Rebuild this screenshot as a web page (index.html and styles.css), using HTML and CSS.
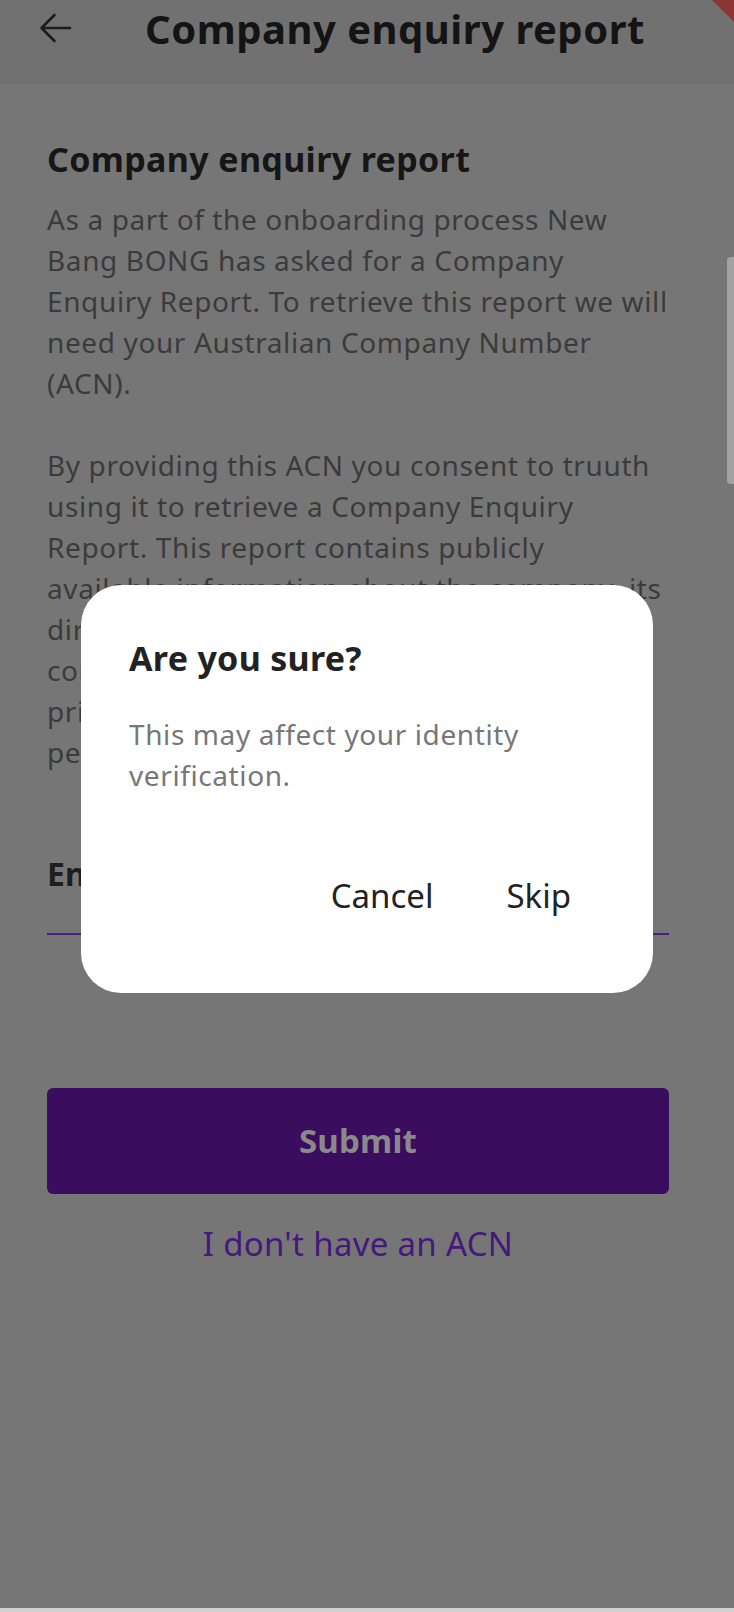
FILE: index.html
```html
<!DOCTYPE html>
<html lang="en">
<head>
<meta charset="utf-8">
<title>Company enquiry report</title>
<link rel="stylesheet" href="styles.css">
</head>
<body>
<div class="screen">
  <header class="appbar">
    <button class="back" aria-label="Back">
      <svg width="34" height="32" viewBox="0 0 34 32"><path d="M32 16H3.5M16.5 3L3.5 16L16.5 29" fill="none" stroke="#1c1c1c" stroke-width="2.6" stroke-linecap="round" stroke-linejoin="round"/></svg>
    </button>
    <h1 class="appbar-title">Company enquiry report</h1>
  </header>
  <main class="content">
    <h2 class="heading">Company enquiry report</h2>
    <p class="para">As a part of the onboarding process New<br>Bang BONG has asked for a Company<br>Enquiry Report. To retrieve this report we will<br>need your Australian Company Number<br>(ACN).</p>
    <p class="para">By providing this ACN you consent to truuth<br>using it to retrieve a Company Enquiry<br>Report. This report contains publicly<br>available information about the company, its<br>directors and shareholders. It may<br>contain personal information about<br>principals such as names and<br>persons associated with it.</p>
    <div class="field">
      <label class="field-label">Enter your ACN</label>
    </div>
    <button class="submit">Submit</button>
    <a class="link">I don't have an ACN</a>
  </main>
  <div class="navbar"></div>
</div>
<div class="scrollbar"></div>
<div class="debug-banner"></div>
<div class="overlay">
  <div class="dialog">
    <h3 class="dialog-title">Are you sure?</h3>
    <p class="dialog-body">This may affect your identity verification.</p>
    <div class="dialog-actions">
      <button class="dialog-btn">Cancel</button>
      <button class="dialog-btn">Skip</button>
    </div>
  </div>
</div>
</body>
</html>
```

FILE: styles.css
```css
* { box-sizing: border-box; }
html, body { margin: 0; padding: 0; }
body {
  font-family: "Noto Sans", "Open Sans", sans-serif;
  background: #767676;
  width: 734px;
  height: 1612px;
  overflow: hidden;
}
.screen {
  min-height: 1612px;
  display: flex;
  flex-direction: column;
}
.appbar {
  height: 84px;
  background: #717171;
  display: flex;
  align-items: flex-start;
  flex-shrink: 0;
}
.back {
  border: 0;
  background: none;
  padding: 0;
  margin: 12px 0 0 38px;
  width: 34px;
  height: 32px;
  display: block;
}
.back svg { display: block; }
.appbar-title {
  margin: 1px 0 0 73px;
  font-size: 40px;
  line-height: 56px;
  font-weight: 700;
  color: #141414;
  letter-spacing: 0.5px;
  white-space: nowrap;
}
.content {
  padding: 0 60px 0 47px;
  display: flex;
  flex-direction: column;
}
.heading {
  margin: 53px 0 0 0;
  font-size: 34px;
  line-height: 44px;
  font-weight: 700;
  color: #161616;
  letter-spacing: 0.35px;
}
.para {
  margin: 18px 0 0 0;
  font-size: 28px;
  line-height: 41px;
  color: #3b3b3b;
  letter-spacing: 0.62px;
  white-space: nowrap;
}
.para + .para { margin-top: 41px; }
.field {
  margin: 81px 5px 0 0;
  padding-bottom: 39px;
  border-bottom: 2px solid #4b1c85;
}
.field-label {
  display: block;
  font-size: 32px;
  line-height: 40px;
  font-weight: 700;
  color: #1e1e1e;
}
.submit {
  margin: 153px 5px 0 0;
  height: 106px;
  border: 0;
  border-radius: 6px;
  background: #3a0d5e;
  color: #8a8a8a;
  font-family: inherit;
  font-size: 33px;
  font-weight: 700;
  line-height: 106px;
  padding: 0;
  letter-spacing: 0.2px;
}
.link {
  margin: 28px 5px 0 0;
  text-align: center;
  font-size: 33px;
  line-height: 44px;
  color: #45187c;
  letter-spacing: 0.3px;
}
.navbar {
  margin-top: auto;
  height: 4px;
  background: #d2d2d2;
}
.scrollbar {
  position: absolute;
  left: 727px;
  top: 257px;
  width: 7px;
  height: 227px;
  background: #a2a2a2;
  border-radius: 4px 0 0 4px;
}
.debug-banner {
  position: absolute;
  right: 0;
  top: 0;
  width: 22px;
  height: 22px;
  background: #8e3535;
  clip-path: polygon(0 0, 100% 0, 100% 100%);
}
.overlay {
  position: fixed;
  inset: 0;
  display: flex;
  justify-content: center;
  align-items: flex-start;
  padding-top: 585px;
}
.dialog {
  width: 572px;
  height: 408px;
  background: #ffffff;
  border-radius: 40px;
  padding: 51px 82px 0 48px;
  display: flex;
  flex-direction: column;
}
.dialog-title {
  margin: 0;
  font-size: 34px;
  line-height: 44px;
  font-weight: 700;
  color: #222222;
  letter-spacing: 0.3px;
}
.dialog-body {
  margin: 34px 0 0 0;
  font-size: 28px;
  line-height: 41px;
  color: #777777;
  letter-spacing: 0.6px;
}
.dialog-actions {
  margin-top: 78px;
  display: flex;
  justify-content: flex-end;
  gap: 73px;
}
.dialog-btn {
  border: 0;
  background: none;
  padding: 0;
  font-family: inherit;
  font-size: 33px;
  line-height: 44px;
  color: #222222;
}
```
